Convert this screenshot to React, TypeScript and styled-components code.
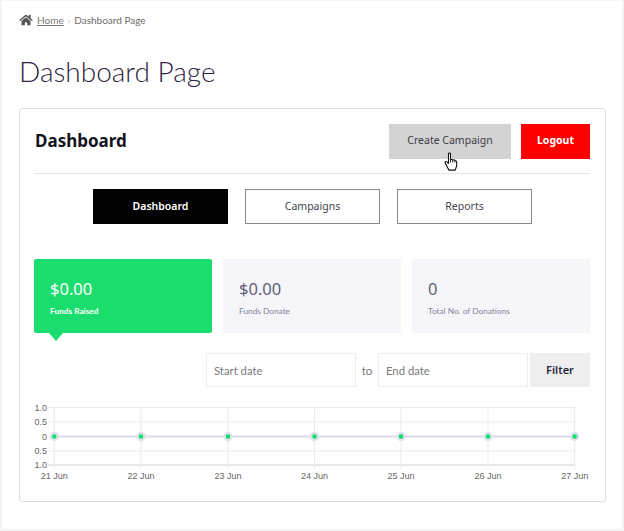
import { styled, createGlobalStyle } from 'styled-components'
import { FaHome } from 'react-icons/fa'

const GlobalStyle = createGlobalStyle`
  html, body { margin: 0; padding: 0; background: #fff; }
  * { box-sizing: border-box; }
  body { font-family: "Noto Sans", "Open Sans", sans-serif; }
`

const Page = styled.div`
  width: 624px;
  height: 531px;
  padding: 0 16px 0 17px;
  border: solid #f4f4f4;
  border-width: 1px 2px 2px 2px;
  overflow: hidden;
`

const Breadcrumb = styled.nav`
  display: flex;
  align-items: center;
  height: 16px;
  margin-top: 11px;
  font-family: Lato, sans-serif;
  font-size: 10px;
  color: #6d6d6d;
`

const HomeIcon = styled(FaHome)`
  width: 14px;
  height: 12px;
  color: #555;
  margin-right: 1px;
`

const HomeLink = styled.a`
  margin-left: 3px;
  color: #777;
  text-decoration: underline;
`

const Separator = styled.span`
  margin: 0 4px;
  color: #bbb;
  font-size: 9px;
`

const Title = styled.h1`
  margin: 25px 0 0;
  height: 55px;
  font-family: Lato, sans-serif;
  font-size: 28px;
  line-height: 36px;
  font-weight: 300;
  color: #2f2540;
`

const Card = styled.section`
  width: 587px;
  height: 394px;
  padding: 15px 15px 0 14px;
  border: 1px solid #dedede;
  border-radius: 3px;
`

const Header = styled.header`
  display: flex;
  align-items: center;
  justify-content: space-between;
  height: 50px;
  padding-bottom: 15px;
  border-bottom: 1px solid #e6e6e6;
`

const CardTitle = styled.h2`
  margin: 0;
  padding: 0 0 2px 1px;
  font-size: 17px;
  font-weight: 700;
  color: #14141c;
`

const HeaderActions = styled.div`
  display: flex;
  gap: 10px;
`

const ActionButton = styled.button<{ $danger?: boolean }>`
  position: relative;
  height: 35px;
  width: ${(p) => (p.$danger ? '69px' : '122px')};
  border: none;
  padding: 0 0 2px;
  font-family: inherit;
  font-size: 10.5px;
  font-weight: ${(p) => (p.$danger ? 700 : 400)};
  color: ${(p) => (p.$danger ? '#fff' : '#3c3c46')};
  background: ${(p) => (p.$danger ? '#ff0000' : '#d3d3d3')};
`

const Cursor = styled.svg`
  position: absolute;
  left: 55px;
  top: 28px;
  width: 14px;
  height: 19px;
`

const Tabs = styled.div`
  display: flex;
  justify-content: center;
  gap: 17px;
  margin-top: 15px;
  padding-left: 1px;
`

const Tab = styled.button<{ $active?: boolean }>`
  width: 135px;
  height: 35px;
  padding: 0 0 2px;
  font-family: inherit;
  font-size: 10.5px;
  font-weight: ${(p) => (p.$active ? 600 : 400)};
  color: ${(p) => (p.$active ? '#fff' : '#44444e')};
  background: ${(p) => (p.$active ? '#000' : '#fff')};
  border: 1px solid ${(p) => (p.$active ? '#000' : '#8a8a8a')};
`

const Stats = styled.div`
  display: grid;
  grid-template-columns: repeat(3, 178px);
  justify-content: space-between;
  margin-top: 35px;
`

const Stat = styled.div<{ $active?: boolean }>`
  position: relative;
  height: 74px;
  padding: 18px 16px 0;
  border-radius: 2px;
  background: ${(p) => (p.$active ? '#1bdd6d' : '#f5f5fa')};
  color: ${(p) => (p.$active ? '#fff' : '#5f5f77')};

  ${(p) =>
    p.$active &&
    `&::after {
      content: '';
      position: absolute;
      left: 15px;
      bottom: -8px;
      border-style: solid;
      border-width: 8px 7px 0;
      border-color: #1bdd6d transparent transparent;
    }`}
`

const StatValue = styled.div`
  font-size: 16.5px;
  line-height: 24px;
`

const StatLabel = styled.div<{ $active?: boolean }>`
  margin-top: 4px;
  font-family: Lato, sans-serif;
  font-size: 8.3px;
  line-height: 12px;
  font-weight: ${(p) => (p.$active ? 700 : 400)};
  color: ${(p) => (p.$active ? '#fff' : '#85859a')};
`

const FilterRow = styled.form`
  display: flex;
  justify-content: flex-end;
  align-items: center;
  margin-top: 20px;
  height: 34px;
`

const DateInput = styled.input`
  width: 150px;
  height: 34px;
  padding: 0 7px;
  border: 1px solid #eeeeee;
  font-family: Lato, sans-serif;
  font-size: 11.3px;
  color: #555;
  outline: none;

  &::placeholder {
    color: #7a7a80;
    opacity: 1;
  }
`

const ToLabel = styled.span`
  width: 22px;
  text-align: center;
  font-family: Lato, sans-serif;
  font-size: 11.5px;
  color: #777;
`

const FilterButton = styled.button`
  width: 60px;
  height: 34px;
  margin-left: 2px;
  padding: 0 0 2px;
  border: none;
  background: #eeeeee;
  font-family: inherit;
  font-size: 11px;
  font-weight: 600;
  color: #26263a;
`

const Chart = styled.svg`
  display: block;
  width: 556px;
  height: 90px;
  margin-top: 13px;
  font-family: "Liberation Sans", Arial, sans-serif;
  font-size: 9px;
`

const xs = [20.3, 107, 194, 280.5, 367, 454, 540.7]
const dates = ['21 Jun', '22 Jun', '23 Jun', '24 Jun', '25 Jun', '26 Jun', '27 Jun']
const ticks = [
  { y: 7.5, label: '1.0' },
  { y: 22, label: '0.5' },
  { y: 36.5, label: '0' },
  { y: 51, label: '0.5' },
  { y: 65, label: '1.0' },
]

const stats = [
  { value: '$0.00', label: 'Funds Raised', active: true },
  { value: '$0.00', label: 'Funds Donate' },
  { value: '0', label: 'Total No. of Donations' },
]

function App() {
  return (
    <Page>
      <GlobalStyle />
      <Breadcrumb>
        <HomeIcon />
        <HomeLink>Home</HomeLink>
        <Separator>›</Separator>
        <span>Dashboard Page</span>
      </Breadcrumb>
      <Title>Dashboard Page</Title>
      <Card>
        <Header>
          <CardTitle>Dashboard</CardTitle>
          <HeaderActions>
            <ActionButton type="button">
              Create Campaign
              <Cursor viewBox="0 0 14 19">
                <path
                  d="M4.5 1.8c0-1 2-1 2 0v5.4l4.6 1c1 .3 1.6 1 1.6 2v3.3c0 .8-.2 1.3-.6 2l-.9 2.6H5l-1.2-2L1.200 11c-.6-1 .7-2 1.600-1.200l1.700 1.500z"
                  fill="#fff"
                  stroke="#111"
                  strokeWidth="1.100"
                  strokeLinejoin="round"
                />
                <path d="M6.500 7.500v3M8.700 8v2.500M10.800 8.500v2" stroke="#111" strokeWidth="0.900" fill="none" />
              </Cursor>
            </ActionButton>
            <ActionButton type="button" $danger>
              Logout
            </ActionButton>
          </HeaderActions>
        </Header>
        <Tabs>
          <Tab type="button" $active>
            Dashboard
          </Tab>
          <Tab type="button">Campaigns</Tab>
          <Tab type="button">Reports</Tab>
        </Tabs>
        <Stats>
          {stats.map((s) => (
            <Stat key={s.label} $active={s.active}>
              <StatValue>{s.value}</StatValue>
              <StatLabel $active={s.active}>{s.label}</StatLabel>
            </Stat>
          ))}
        </Stats>
        <FilterRow>
          <DateInput placeholder="Start date" />
          <ToLabel>to</ToLabel>
          <DateInput placeholder="End date" />
          <FilterButton type="button">Filter</FilterButton>
        </FilterRow>
        <Chart viewBox="0 0 556 90">
          {ticks.map((t) => (
            <g key={t.y}>
              <line x1={14} x2={541} y1={t.y} y2={t.y} stroke={t.y === 65 ? '#cfcfcf' : '#ebebeb'} />
              <text x={13} y={t.y + 3} textAnchor="end" fill="#666">
                {t.label}
              </text>
            </g>
          ))}
          {xs.map((x, i) => (
            <g key={x}>
              <line x1={x} x2={x} y1={7} y2={69} stroke="#ebebeb" />
              <text x={x} y={79} textAnchor="middle" fill="#666">
                {dates[i]}
              </text>
            </g>
          ))}
          <line x1={xs[0]} x2={xs[6]} y1={36.500} y2={36.500} stroke="#e0e0ee" strokeWidth={2.500} />
          {xs.map((x) => (
            <circle key={x} cx={x} cy={36.500} r={3.500} fill="#00e266" stroke="#e0e0ee" strokeWidth={2.500} />
          ))}
        </Chart>
      </Card>
    </Page>
  )
}

export default App
